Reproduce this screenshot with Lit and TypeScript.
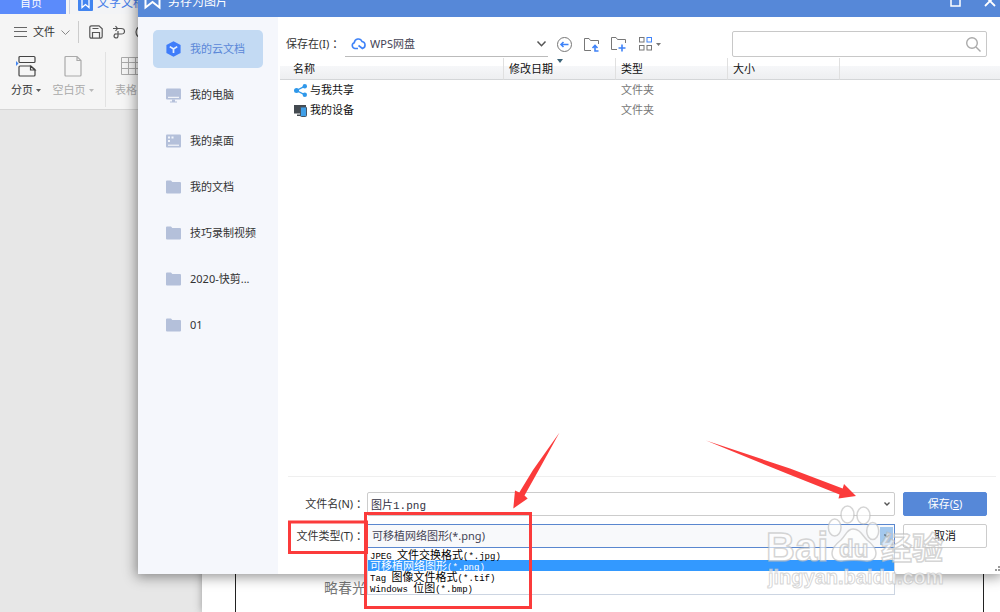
import { LitElement, html, svg, css } from "lit";
import { customElement, state } from "lit/decorators.js";

type Part = { text: string; latin?: boolean };

const places = [
  { icon: "cloud", name: "我的云文档" },
  { icon: "pc", name: "我的电脑" },
  { icon: "desk", name: "我的桌面" },
  { icon: "folder", name: "我的文档" },
  { icon: "folder", name: "技巧录制视频" },
  { icon: "folder", name: "2020-快剪..." },
  { icon: "folder", name: "01" },
];

const formats: Part[][] = [
  [{ text: "JPEG ", latin: true }, { text: "文件交换格式" }, { text: "(*.jpg)", latin: true }],
  [{ text: "可移植网络图形" }, { text: "(*.png)", latin: true }],
  [{ text: "Tag ", latin: true }, { text: "图像文件格式" }, { text: "(*.tif)", latin: true }],
  [{ text: "Windows ", latin: true }, { text: "位图" }, { text: "(*.bmp)", latin: true }],
];

const placeIcons: Record<string, unknown> = {
  cloud: svg`<path d="M7.5 0.3 14.6 4v8L7.5 15.7 0.4 12V4z" fill="#3f7dfa"/>
    <path d="M3.8 5.6 7.5 8l3.7-2.4M7.5 8v4" fill="none" stroke="#e4efff" stroke-width="1.7"/>`,
  pc: svg`<rect y="1.5" width="15" height="11" rx="1" fill="#b4c0da"/>
    <path d="M2 10.3h11" stroke="#fff"/><path d="M6 12.500h3v2h2v1H4v-1h2z" fill="#b4c0da"/>`,
  desk: svg`<rect y="1.5" width="15" height="13" rx="1" fill="#b4c0da"/>
    <path d="M2 12.2h11" stroke="#fff"/><path d="M2 3.5h2v2H2zM5.5 3.5h2v2h-2zM2 7h2v2H2z" fill="#f2f5fb"/>`,
  folder: svg`<path d="M0 2.5Q0 1.5 1 1.5H5l1.3 1.6H14q1 0 1 1V13.5q0 1-1 1H1q-1 0-1-1z" fill="#b4c0da"/>`,
};

const caret = html`<svg class="caret" viewBox="0 0 5 3"><path d="M0 0h5L2.5 3z" fill="currentColor"/></svg>`;

@customElement("app-root")
export class AppRoot extends LitElement {
  @state() private place = 0;
  @state() private format = 1;

  static styles = css`
    :host {
      display: block;
      position: relative;
      height: 100vh;
      overflow: hidden;
      background: #e7e7e7;
      color: #333;
      font: 11px/16px "Noto Sans", "Noto Sans CJK SC", sans-serif;
    }
    * { box-sizing: border-box; }
    svg { display: block; flex: none; overflow: visible; }
    button, input, select {
      font: inherit; color: inherit; margin: 0; padding: 0; border: 0;
      background: none; border-radius: 0; outline: 0; appearance: none;
    }
    .caret { width: 5px; height: 3px; opacity: 0.8; }

    .editor { display: flex; flex-direction: column; height: 100%; }
    .tabs { display: flex; height: 14px; background: #f3f4f6; align-items: flex-end; }
    .tab { display: flex; align-items: center; height: 22px; white-space: nowrap; }
    .home { width: 66px; justify-content: center; background: #5b8bfb; color: #fff; padding-right: 4px; }
    .doc { margin-left: 3px; padding-left: 8px; gap: 4px; border-left: 1px solid #ccd2e2; color: #4a80e8; font-size: 12px; }
    .quick { display: flex; align-items: center; height: 36px; padding-left: 14px; background: #f5f5f5; white-space: nowrap; }
    .quick button { display: flex; align-items: center; }
    .file { gap: 6px; font-size: 11px; color: #333; }
    .bar { width: 1px; height: 22px; margin: 0 10px 0 8px; background: #ccc; }
    .icons { display: flex; gap: 9px; color: #555; }
    .ribbon { display: flex; height: 60px; background: #f5f5f5; border-bottom: 1px solid #d6d6d6; white-space: nowrap; }
    .tool { display: flex; flex-direction: column; align-items: center; gap: 5px; padding-top: 5px; }
    .tool span { display: flex; align-items: center; gap: 3px; }
    .split { width: 52px; }
    .blank { width: 42px; color: #aaa; }
    .grid { margin-left: 9px; color: #aaa; }
    .rule { width: 1px; margin: 2px 0 2px 11px; background: #e2e2e2; }
    .desk { flex: 1; display: flex; padding-left: 202px; }
    .paper { flex: 1; background: #fff; padding: 0 16px 0 33px; box-shadow: 0 0 8px #999; display: flex; }
    .frame { flex: 1; border: solid #222; border-width: 0 1px; display: flex; align-items: flex-end; padding: 0 0 14px 88px; font-size: 14px; line-height: 20px; color: #777; }

    .dialog {
      position: absolute; left: 138px; right: 0; top: -15px; bottom: 38px;
      display: flex; flex-direction: column; background: #fff; box-shadow: 0 1px 12px 2px rgba(0, 0, 0, 0.42);
    }
    .title { display: flex; align-items: center; height: 32px; padding: 2px 4px 0 6px; background: #5688d8; color: #fff; font-size: 12px; gap: 7px; }
    .title .name { flex: 1; }
    .title button { width: 14px; height: 14px; margin-left: 12px; }
    .body { flex: 1; display: flex; min-height: 0; }
    .places { width: 140px; padding: 13px 15px; display: flex; flex-direction: column; gap: 8px; background: #f5f7fc; }
    .place { display: flex; align-items: center; gap: 9px; height: 38px; padding-left: 13px; border-radius: 5px; white-space: nowrap; }
    .place.on { background: #c3daf3; color: #5a87d8; }
    .main { flex: 1; min-width: 0; display: flex; flex-direction: column; }

    .look { display: flex; align-items: center; padding: 14px 13px 1px 8px; }
    .look label { width: 59px; white-space: nowrap; }
    .where { display: flex; align-items: center; width: 203px; height: 26px; padding: 0 2px 0 6px; border-bottom: 1px solid #bbb; margin-right: 9px; }
    .where select { flex: 1; padding-left: 4px; color: #445; }
    .nav { display: flex; gap: 12px; align-items: center; }
    .view { display: flex; align-items: center; gap: 3px; color: #555; }
    .search { display: flex; align-items: center; flex: 0 1 255px; height: 26px; margin-left: auto; padding-right: 5px; border: 1px solid #c8c8c8; border-radius: 2px; }
    .search input { flex: 1; min-width: 0; height: 100%; padding-left: 6px; }

    .files { flex: 1; padding-left: 2px; }
    table { width: 100%; border-collapse: separate; border-spacing: 0; table-layout: fixed; }
    th { width: 112px; height: 22px; padding: 0 0 0 5px; text-align: left; font-weight: 400; color: #111; border-right: 1px solid #e0e0e0; border-bottom: 1px solid #d4d6d8; background: linear-gradient(#fff 8px, #f6f7f9 8px, #eeeff1); position: relative; }
    th:first-child { width: 224px; padding-left: 13px; }
    th:last-child { width: auto; border-right: 0; }
    .sort { position: absolute; left: 53px; top: 1px; width: 6px; height: 4px; }
    td { height: 20px; padding: 0 0 0 5px; color: #777; }
    td:first-child { padding-left: 14px; color: #111; }
    .entry { display: flex; align-items: center; gap: 3px; }

    .save { display: grid; grid-template-columns: 79px 1fr 92px; row-gap: 8px; align-items: center; margin: 0 4px 0 10px; padding: 15px 9px 26px 0; border-top: 1px solid #efefef; }
    .save > label { text-align: right; white-space: nowrap; }
    .field { position: relative; display: flex; align-items: center; height: 24px; border: 1px solid #ccc; border-radius: 2px; background: #fff; min-width: 0; }
    .field input { flex: 1; height: 100%; min-width: 0; padding-left: 3px; color: #334; font-family: "Liberation Mono", "Noto Sans CJK SC", monospace; }
    .field > svg { margin-right: 4px; }
    .field.open { border-color: #5a87cf; background: #f8f9fb; border-radius: 0; }
    .field select { flex: 1; height: 100%; padding-left: 4px; color: #445; }
    .drop { display: flex; align-items: center; justify-content: center; width: 13px; height: 18px; margin-right: 1px; background: #a3c8ee; }
    .btn { height: 24px; margin-left: 8px; border: 1px solid #ccc; border-radius: 2px; background: #fff; color: #111; }
    .primary { background: #5688d8; border-color: #5688d8; color: #fff; }
    .list { position: absolute; left: -1px; right: -1px; top: 24px; margin: 0; padding: 0 0 1px; list-style: none; background: #fff; border: 1px solid #ccd5e2; border-top: 0; color: #000; line-height: 11px; }
    .list li { display: flex; align-items: baseline; height: 11px; padding-left: 2px; white-space: pre; }
    .list li.on { background: #3399ff; color: #fff; }
    .list .latin { font: 9px/11px "Liberation Mono", monospace; }
    .grip { position: absolute; right: 0; bottom: 3px; width: 5px; height: 5px; }
    .marks { position: absolute; z-index: 1; left: 0; top: 0; width: 1000px; height: 612px; pointer-events: none; }
    .stamp { fill: rgba(255, 255, 255, 0.6); stroke: rgba(185, 185, 185, 0.6); stroke-width: 1.5px; font-family: "Liberation Sans", "Noto Sans CJK SC", sans-serif; font-weight: 700; }
    .big { font-size: 40px; }
    .mid { font-size: 24px; }
    .han { font-size: 31px; }
    .url { font-size: 20px; stroke-width: 1px; }
  `;

  private editor() {
    return html`
      <div class="editor">
        <div class="tabs">
          <div class="tab home">首页</div>
          <div class="tab doc">
            <svg width="15" height="15"><rect width="15" height="15" rx="1" fill="#4285f0"/><path d="M4 3h7v8.500L7.500 8.500 4 11.500z" fill="none" stroke="#fff" stroke-width="1.300"/></svg>
            文字文稿
          </div>
        </div>
        <div class="quick">
          <button class="file">
            <svg width="13" height="10" stroke="#666"><path d="M0 .5h13M0 4.500h13M0 9.500h13"/></svg>文件
            <svg width="9" height="5" fill="none" stroke="#888"><path d="M.5.500 4.500 4.500 8.500.500"/></svg>
          </button>
          <div class="bar"></div>
          <div class="icons">
            <svg width="14" height="14" fill="none" stroke="currentColor" stroke-width="1.200"><path d="M.8 2.500Q.8.800 2.500.800H10l3.200 3v7.700q0 1.700-1.700 1.700h-9Q.8 13.200.8 11.500zM3.500 3.500h6M3.500 13V7.500h7V13"/></svg>
            <svg width="14" height="14" fill="none" stroke="currentColor" stroke-width="1.200"><path d="M1 3.500h8q3.500 0 3.500 2.800T9 9H6M3.500 1l2 2.500-2 2.500M6 6v5.500M6 9H4.500a2 2 0 1 0 1.500 2.500"/></svg>
            <svg width="14" height="14" fill="none" stroke="currentColor" stroke-width="1.200"><circle cx="7" cy="7" r="6"/></svg>
          </div>
        </div>
        <div class="ribbon">
          <div class="tool split">
            <svg width="20" height="22" fill="none" stroke="#444" stroke-width="1.200"><rect x="3" y="1.500" width="16" height="6" rx="1"/><path d="M4 21q-1 0-1-1v-8q0-1 1-1h11l4 3.500V20q0 1-1 1zM14.500 11v4H19z"/><path d="M0 6v5l2.500-2.500z" fill="#4285f0" stroke="none"/></svg>
            <span>分页 ${caret}</span>
          </div>
          <div class="tool blank">
            <svg width="18" height="22" fill="none" stroke="#aaa" stroke-width="1.200"><path d="M2 21q-1 0-1-1V2.500q0-1 1-1h11l4 4V20q0 1-1 1zM13 1.500v4h4"/></svg>
            <span>空白页 ${caret}</span>
          </div>
          <div class="rule"></div>
          <div class="tool grid">
            <svg width="22" height="22" fill="none" stroke="#aaa"><path d="M6.500 2.500h20v17h-20zM6.500 7.500h20M6.500 13.500h20M13.500 2.500v17M20.500 2.500v17"/></svg>
            <span>表格</span>
          </div>
        </div>
        <div class="desk"><div class="paper"><div class="frame">略春光</div></div></div>
      </div>`;
  }

  private look() {
    return html`
      <div class="look">
        <label for="where">保存在(I) ：</label>
        <div class="where">
          <svg width="15" height="13" fill="none" stroke="#3f83f8" stroke-width="1.600"><path d="M7 11.500H3.800A3 3 0 0 1 3.300 5.700 4 4 0 0 1 11 4.500a3.600 3.600 0 0 1 .5 7L7.500 8.500"/></svg>
          <select id="where"><option>WPS网盘</option></select>
          <svg width="9" height="6" fill="none" stroke="#555" stroke-width="1.500"><path d="M.5.500 4.500 4.700 8.500.500"/></svg>
        </div>
        <div class="nav">
          <button aria-label="后退"><svg width="15" height="15" fill="none" stroke="#777"><circle cx="7.500" cy="7.500" r="7"/><path d="M4 7.500h7.500M6.500 5 4 7.500 6.500 10" stroke="#3f83f8" stroke-width="1.600"/></svg></button>
          <button aria-label="向上"><svg width="15" height="15" fill="none" stroke="#777"><path d="M7 13.500H.5V1.500H5l1.500 2h8V7"/><path d="M14.500 14H11V8.500M8.500 11 11 8.500l2.500 2.500" stroke="#3f83f8" stroke-width="1.600"/></svg></button>
          <button aria-label="新建文件夹"><svg width="15" height="15" fill="none" stroke="#777"><path d="M6 12.500H.5V.500H5l1.500 2h8V6"/><path d="M11 7.500v7M7.500 11h7" stroke="#3f83f8" stroke-width="1.600"/></svg></button>
          <button class="view" aria-label="视图"><svg width="15" height="14" fill="none" stroke="#777"><rect x="1.500" y=".5" width="4.500" height="4.500"/><rect x="1.500" y="8.500" width="4.500" height="4.500"/><rect x="9" y="8.500" width="4.500" height="4.500"/><rect x="9" y=".5" width="4.500" height="4.500" stroke="#3f83f8"/></svg>${caret}</button>
        </div>
        <div class="search">
          <input type="search" aria-label="搜索" />
          <svg width="15" height="15" fill="none" stroke="#aaa" stroke-width="1.400"><circle cx="6" cy="6" r="5.300"/><path d="m10 10 4.500 4.500"/></svg>
        </div>
      </div>`;
  }

  private files() {
    return html`
      <div class="files">
        <table>
          <thead>
            <tr>
              <th>名称</th>
              <th>修改日期<svg class="sort" viewBox="0 0 6 4"><path d="M0 0h6L3 4z" fill="#3c6478"/></svg></th>
              <th>类型</th><th>大小</th><th></th>
            </tr>
          </thead>
          <tbody>
            <tr>
              <td><div class="entry"><svg width="13" height="13" fill="#2f98ea"><path d="M11 2.200 2.500 6.500 11 10.800" fill="none" stroke="#2f98ea" stroke-width="1.300"/><circle cx="2.500" cy="6.500" r="2.500"/><circle cx="10.800" cy="2.300" r="2.200"/><circle cx="10.800" cy="10.700" r="2.200"/></svg>与我共享</div></td>
              <td></td><td>文件夹</td><td></td><td></td>
            </tr>
            <tr>
              <td><div class="entry"><svg width="13" height="13"><path d="M0 1h12v8.500H0zM3 10.500h4v1.500H3z" fill="#444a50"/><rect x="6.500" y="3" width="6" height="9.500" rx="1" fill="#3f9fe8" stroke="#456"/></svg>我的设备</div></td>
              <td></td><td>文件夹</td><td></td><td></td>
            </tr>
          </tbody>
        </table>
      </div>`;
  }

  private form() {
    const arrow = html`<svg width="6" height="4" fill="none" stroke="#555" stroke-width="1.400"><path d="M.5.500 3 3 5.500.500"/></svg>`;
    return html`
      <div class="save">
        <label for="name">文件名(N) ：</label>
        <div class="field"><input id="name" value="图片1.png" />${arrow}</div>
        <button class="btn primary">保存(<u>S</u>)</button>
        <label for="type">文件类型(T) ：</label>
        <div class="field open">
          <select id="type"><option>${formats[this.format].map((p) => p.text).join("")}</option></select>
          <span class="drop">${arrow}</span>
          <ul class="list" role="listbox" aria-label="文件类型">
            ${formats.map((f, i) => html`<li role="option" aria-selected=${i === this.format} class=${i === this.format ? "on" : ""} @click=${() => (this.format = i)}>${f.map((p) => html`<span class=${p.latin ? "latin" : ""}>${p.text}</span>`)}</li>`)}
          </ul>
        </div>
        <button class="btn">取消</button>
      </div>`;
  }

  render() {
    return html`
      ${this.editor()}
      <div class="dialog" role="dialog" aria-label="另存为图片">
        <div class="title">
          <svg width="17" height="15" fill="none" stroke="#fff" stroke-width="2"><path d="M1.500 0v12.500L8.500 7l7 5.500V0"/></svg>
          <span class="name">另存为图片</span>
          <button aria-label="最大化"><svg width="14" height="14" fill="none" stroke="#fff" stroke-width="1.500"><rect x="2" y="2" width="9" height="9"/></svg></button>
          <button aria-label="关闭"><svg width="14" height="14" fill="none" stroke="#fff" stroke-width="1.800"><path d="m3 1 10 10M13 1 3 11"/></svg></button>
        </div>
        <div class="body">
          <nav class="places">
            ${places.map((p, i) => html`<button class="place ${i === this.place ? "on" : ""}" @click=${() => (this.place = i)}><svg width="15" height="16">${placeIcons[p.icon]}</svg>${p.name}</button>`)}
          </nav>
          <div class="main">${this.look()}${this.files()}${this.form()}</div>
        </div>
        <svg class="grip" viewBox="0 0 5 5" fill="#999"><path d="M3 0h2v2H3zM0 3h2v2H0zM3 3h2v2H3z"/></svg>
      </div>
      <svg class="marks" viewBox="0 0 1000 612" aria-hidden="true">
        <g fill="none" stroke="#fb3b3b" stroke-width="3">
          <rect x="289.500" y="522" width="77" height="30.500"/>
          <rect x="365.500" y="513.500" width="165" height="94"/>
        </g>
        <g fill="#fb3b3b">
          <path d="M559.500 432.500 541 466 524.500 495.500l3.200 3L513.300 508.500l1.700-18 4.300 2L533 470z"/>
          <path d="M706 440.500 790 468.500 842.700 488.500l1.300-4.500 12 12-17.500 2.500 1-4L788 474z"/>
        </g>
        <g class="stamp">
          <text class="big" x="766" y="561">Bai</text>
          <ellipse cx="847.500" cy="514.500" rx="6.500" ry="8.500"/>
          <ellipse cx="863.500" cy="515.500" rx="6.500" ry="8.500"/>
          <ellipse cx="834.700" cy="527.500" rx="6.300" ry="8.500"/>
          <ellipse cx="872.700" cy="531" rx="6" ry="8.500"/>
          <path d="M853 529c7 0 9 6 14 11 5 4 9 8 9 13 0 6-5 9-11 8-5-1-17-1-22 0-6 1-11-2-11-8 0-5 4-9 9-13 5-5 6-11 12-11z"/>
          <text class="mid" x="839" y="557">du</text>
          <text class="han" x="881" y="559">经验</text>
          <text class="url" x="768" y="584">jingyan.baidu.com</text>
        </g>
      </svg>`;
  }
}
